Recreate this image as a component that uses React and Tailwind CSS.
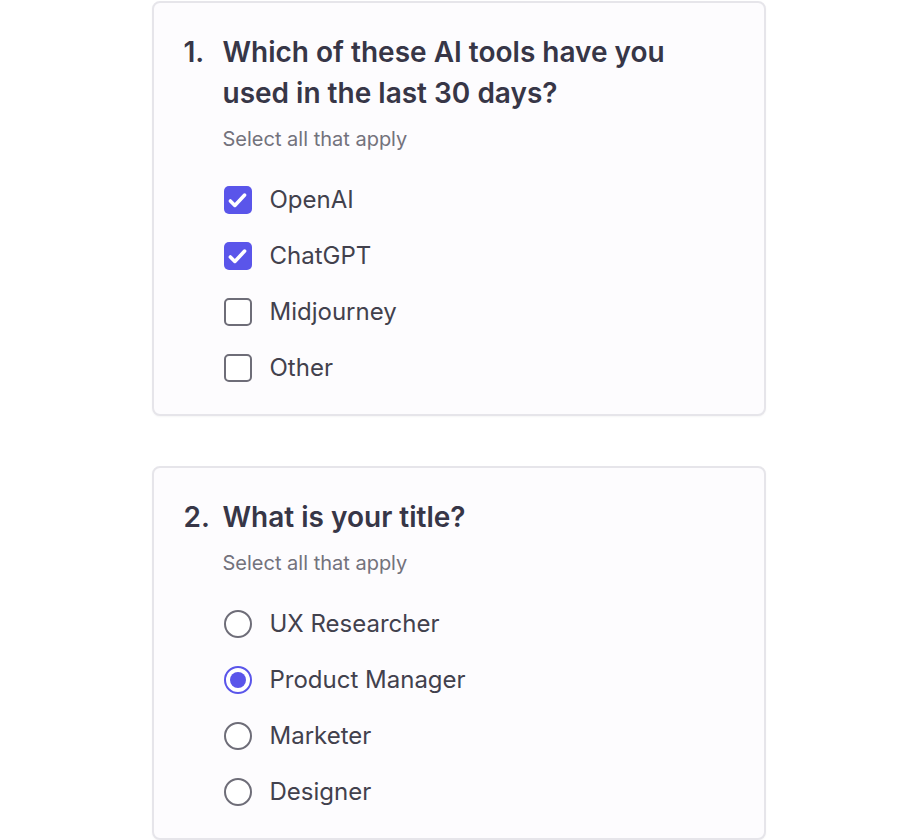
import React, { useState } from 'react';

const font = { fontFamily: 'Inter, "Noto Sans", sans-serif' };

const Checkbox = ({ checked }) => (
  checked ? (
    <span className="w-7 h-7 rounded-[5px] bg-[#5a55ea] flex items-center justify-center shrink-0">
      <svg width="23" height="23" viewBox="0 0 20 20" fill="none">
        <path d="M3.8 10.4l3.9 3.9 8.5-9" stroke="white" strokeWidth="3.1" strokeLinecap="round" strokeLinejoin="round" />
      </svg>
    </span>
  ) : (
    <span className="w-7 h-7 rounded-[5px] border-2 border-[#6e6d78] bg-white shrink-0"></span>
  )
);

const Radio = ({ checked }) => (
  checked ? (
    <span className="w-7 h-7 rounded-full border-2 border-[#5a55ea] bg-white flex items-center justify-center shrink-0">
      <span className="w-4 h-4 rounded-full bg-[#5a55ea]"></span>
    </span>
  ) : (
    <span className="w-7 h-7 rounded-full border-2 border-[#6e6d78] bg-white shrink-0"></span>
  )
);

const Question = ({ num, title, type, options, selected, onToggle }) => (
  <div className="w-[614px] mx-auto bg-[#fdfcfe] border-2 border-[#e6e5ea] rounded-lg px-[30px] pt-[29px] pb-[32px] shadow-[0_1px_2px_rgba(0,0,0,0.04)]">
    <div className="flex text-[28px] leading-[41px] font-semibold text-[#373647]">
      <span className="w-[39px] shrink-0">{num}.</span>
      <h2 className="max-w-[480px]">{title}</h2>
    </div>
    <div className="pl-[39px]">
      <p className="mt-[11px] text-[20px] leading-[28px] text-[#73727c]">Select all that apply</p>
      <ul className="mt-[33px] flex flex-col gap-7">
        {options.map((opt) => {
          const on = selected.includes(opt);
          return (
            <li key={opt} className="flex items-center gap-[18px] h-7 pl-px cursor-pointer" onClick={() => onToggle(opt)}>
              {type === 'checkbox' ? <Checkbox checked={on} /> : <Radio checked={on} />}
              <span className="text-[24px] leading-7 text-[#42414d]">{opt}</span>
            </li>
          );
        })}
      </ul>
    </div>
  </div>
);

export default function App() {
  const [tools, setTools] = useState(['OpenAI', 'ChatGPT']);
  const [role, setRole] = useState('Product Manager');

  return (
    <div className="min-h-screen bg-white pt-px flex flex-col gap-[50px]" style={font}>
      <Question
        num={1}
        title="Which of these AI tools have you used in the last 30 days?"
        type="checkbox"
        options={['OpenAI', 'ChatGPT', 'Midjourney', 'Other']}
        selected={tools}
        onToggle={(o) => setTools((t) => (t.includes(o) ? t.filter((x) => x !== o) : [...t, o]))}
      />
      <Question
        num={2}
        title="What is your title?"
        type="radio"
        options={['UX Researcher', 'Product Manager', 'Marketer', 'Designer']}
        selected={[role]}
        onToggle={(o) => setRole(o)}
      />
    </div>
  );
}
